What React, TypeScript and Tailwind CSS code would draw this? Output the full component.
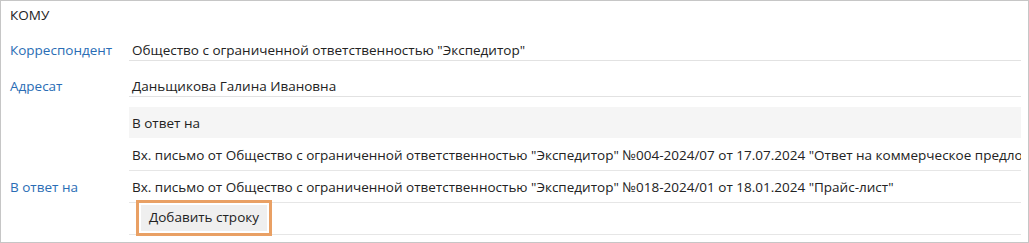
import React from "react";

const rows = [
  'Вх. письмо от Общество с ограниченной ответственностью "Экспедитор" №004-2024/07 от 17.07.2024 "Ответ на коммерческое предложение"',
  'Вх. письмо от Общество с ограниченной ответственностью "Экспедитор" №018-2024/01 от 18.01.2024 "Прайс-лист"',
];

export default function App() {
  return (
    <div
      className="w-[1029px] h-[243px] bg-white border border-[#c6c6c6] text-[13.5px] leading-[18px] text-[#222] overflow-hidden"
      style={{ fontFamily: '"Open Sans", "Noto Sans", sans-serif' }}
    >
      <div className="pl-[9px] pr-[7px]">
        <div className="h-[24px] flex items-center pt-[4px]">
          <span>КОМУ</span>
        </div>
        <div className="grid grid-cols-[119px_1fr]">
          <div className="h-[36px] flex items-end pb-[2px] text-[#2a6db5]">Корреспондент</div>
          <div className="h-[36px] flex items-end pb-[1px] pl-[3px] border-b border-[#e2e2e2]">
            Общество с ограниченной ответственностью "Экспедитор"
          </div>
          <div className="h-[36px] flex items-end pb-[2px] text-[#2a6db5]">Адресат</div>
          <div className="h-[36px] flex items-end pb-[1px] pl-[3px] border-b border-[#e2e2e2]">
            Даньщикова Галина Ивановна
          </div>
          <div className="mt-[10px] flex flex-col justify-end pb-[39px] text-[#2a6db5]">
            <span>В ответ на</span>
          </div>
          <div className="mt-[10px] min-w-0">
            <div className="h-[31px] flex items-center pl-[3px] bg-[#f5f5f5]">В ответ на</div>
            <div className="h-[33px] flex items-center pt-[2px] pl-[3px] border-b border-[#e6e6e6] whitespace-nowrap overflow-hidden">
              {rows[0]}
            </div>
            <div className="h-[32px] flex items-center pt-[1px] pl-[3px] border-b border-[#e6e6e6] whitespace-nowrap overflow-hidden">
              {rows[1]}
            </div>
            <div className="h-[32px] border-b border-[#e6e6e6] pl-[12px] pt-[2px]">
              <button className="h-[26px] w-[126px] bg-[#efefef] text-[#222] text-[13.5px] leading-none outline-[3px] outline-solid outline-[#e9a064] outline-offset-[2px]">
                Добавить строку
              </button>
            </div>
          </div>
        </div>
      </div>
    </div>
  );
}
